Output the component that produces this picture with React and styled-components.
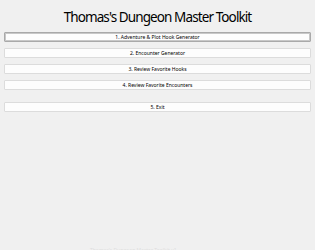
import React from 'react';
import styled, { createGlobalStyle } from 'styled-components';

const GlobalStyle = createGlobalStyle`
  html, body {
    margin: 0;
    padding: 0;
    background: #f0f0f0;
    overflow: hidden;
  }
  body {
    font-family: "Noto Sans", "Open Sans", sans-serif;
  }
`;

const Window = styled.div`
  width: 315px;
  height: 250px;
  box-sizing: border-box;
  padding: 8px 4px 0 4px;
  display: flex;
  flex-direction: column;
  background: #f0f0f0;
  overflow: hidden;
`;

const Title = styled.h1`
  margin: 0 0 6px 0;
  font-family: "Noto Sans", sans-serif;
  font-weight: 400;
  font-size: 13.5px;
  letter-spacing: -0.9px;
  line-height: 18px;
  color: #000;
  text-align: center;
`;

const Menu = styled.div`
  display: flex;
  flex-direction: column;
  gap: 6px;
`;

const MenuButton = styled.button`
  height: 10px;
  box-sizing: border-box;
  margin: ${p => (p.$spaced ? '6px 0 0 0' : '0')};
  padding: 0;
  border: 1px solid ${p => (p.$focused ? '#a9a9a9' : '#dcdcdc')};
  box-shadow: ${p => (p.$focused ? 'inset 0 0 0 1px #c8c8c8' : 'none')};
  border-radius: 1px;
  background: #fdfdfd;
  font-family: "Noto Sans", sans-serif;
  font-size: 5px;
  line-height: 8px;
  color: #000;
  text-align: center;
  white-space: nowrap;
`;

const Footer = styled.div`
  margin-top: auto;
  height: 2px;
  overflow: hidden;
  padding-left: 86px;
  font-family: "Noto Sans", sans-serif;
  font-size: 5px;
  line-height: 5px;
  color: #dedede;
`;

const items = [
  '1. Adventure & Plot Hook Generator',
  '2. Encounter Generator',
  '3. Review Favorite Hooks',
  '4. Review Favorite Encounters',
];

export default function App() {
  return (
    <>
      <GlobalStyle />
      <Window>
        <Title>Thomas's Dungeon Master Toolkit</Title>
        <Menu>
          {items.map((label, i) => (
            <MenuButton key={label} $focused={i === 0}>
              {label}
            </MenuButton>
          ))}
          <MenuButton $spaced>5. Exit</MenuButton>
        </Menu>
        <Footer>Thomas's Dungeon Master Toolkit v1</Footer>
      </Window>
    </>
  );
}
